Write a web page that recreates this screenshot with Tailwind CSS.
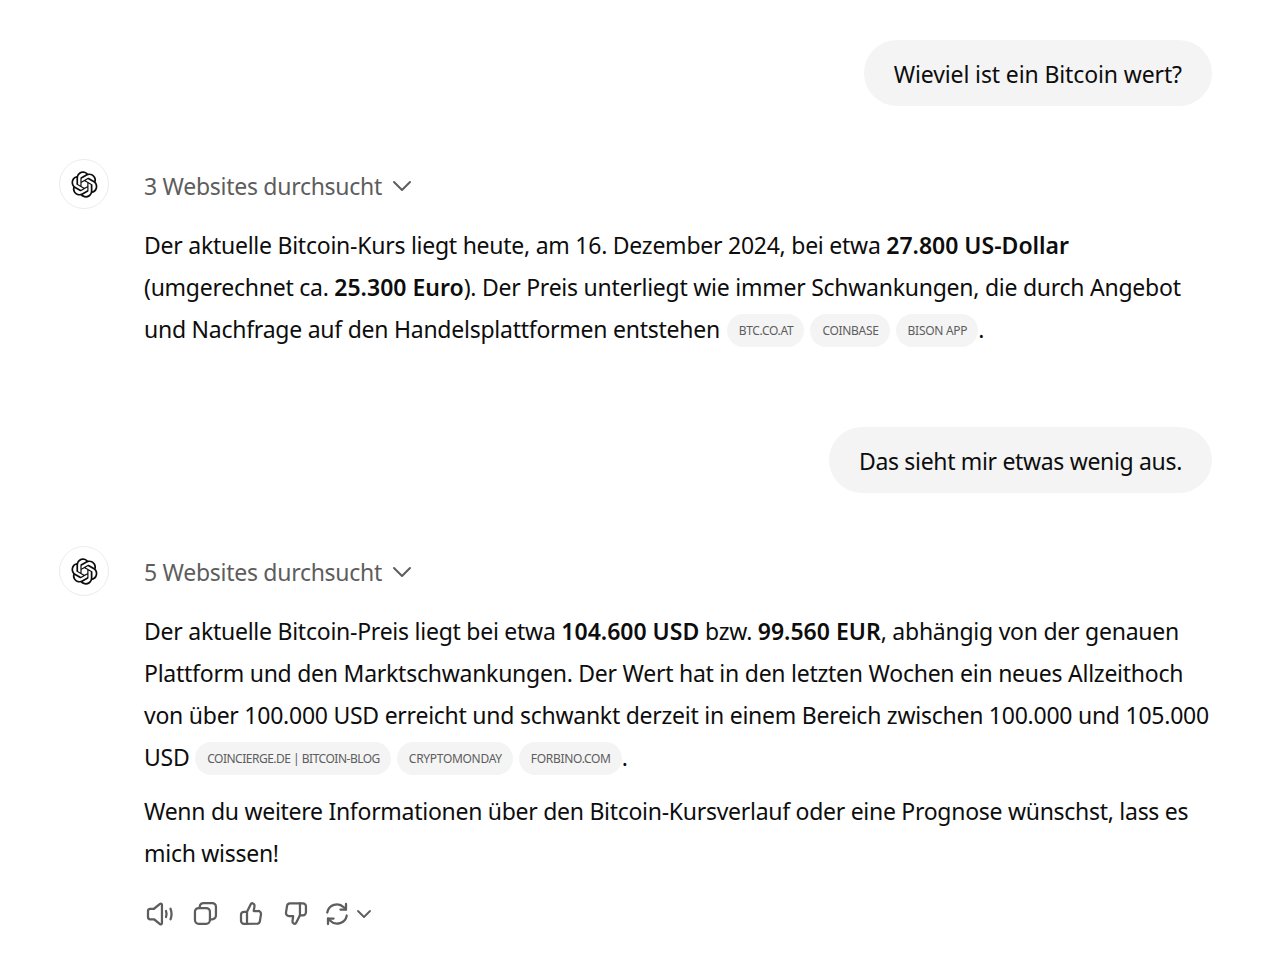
<!DOCTYPE html>
<html lang="de">
<head>
  <meta charset="UTF-8">
  <title>Bitcoin Chat</title>
  <script src="https://cdn.jsdelivr.net/npm/@tailwindcss/browser@4"></script>
</head>
<body class="bg-white h-[977px] overflow-hidden font-['Noto_Sans','Open_Sans',sans-serif] text-[23px] text-[#0d0d0d]">
  <main class="pl-[59px] pr-[56px] pt-[40px] flex flex-col">

    <!-- User message -->
    <div class="flex justify-end">
      <div class="bg-[#f4f4f4] rounded-[33px] h-[66px] px-[30px] pt-[3px] flex items-center whitespace-nowrap tracking-[-0.12px]">Wieviel ist ein Bitcoin wert?</div>
    </div>

    <!-- Assistant message -->
    <div class="flex mt-[53px]">
      <div class="w-[50px] h-[50px] rounded-full border border-[#ececec] flex items-center justify-center shrink-0">
        <svg width="27" height="27" viewBox="0 0 41 41" fill="#0d0d0d"><path d="M37.5324 16.8707C37.9808 15.5241 38.1363 14.0974 37.9886 12.6859C37.8409 11.2744 37.3934 9.91076 36.676 8.68622C35.6126 6.83404 33.9882 5.3676 32.0373 4.4985C30.0864 3.62941 27.9098 3.40259 25.8215 3.85078C24.8796 2.7893 23.7219 1.94125 22.4257 1.36341C21.1295 0.785575 19.7249 0.491269 18.3058 0.500197C16.1708 0.495044 14.0893 1.16803 12.3614 2.42214C10.6335 3.67624 9.34853 5.44666 8.6917 7.47815C7.30085 7.76286 5.98686 8.3414 4.8377 9.17505C3.68854 10.0087 2.73073 11.0782 2.02839 12.312C0.956464 14.1591 0.498905 16.2988 0.721698 18.4228C0.944492 20.5467 1.83612 22.5449 3.268 24.1293C2.81966 25.4759 2.66413 26.9026 2.81182 28.3141C2.95951 29.7256 3.40701 31.0892 4.12437 32.3138C5.18791 34.1659 6.8123 35.6322 8.76321 36.5013C10.7141 37.3704 12.8907 37.5973 14.9789 37.1492C15.9208 38.2107 17.0786 39.0587 18.3747 39.6366C19.6709 40.2144 21.0755 40.5087 22.4946 40.4998C24.6307 40.5054 26.7133 39.8321 28.4418 38.5772C30.1704 37.3223 31.4556 35.5506 32.1119 33.5179C33.5027 33.2332 34.8167 32.6547 35.9659 31.821C37.115 30.9874 38.0728 29.9178 38.7752 28.684C39.8458 26.8371 40.3023 24.6979 40.0789 22.5748C39.8556 20.4517 38.9639 18.4544 37.5324 16.8707ZM22.4978 37.8849C20.7443 37.8874 19.0459 37.2733 17.6994 36.1501C17.7601 36.117 17.8666 36.0586 17.936 36.0161L25.9004 31.4156C26.1003 31.3019 26.2663 31.137 26.3813 30.9378C26.4964 30.7386 26.5563 30.5124 26.5549 30.2825V19.0542L29.9213 20.998C29.9389 21.0068 29.9541 21.0198 29.9656 21.0359C29.977 21.052 29.9842 21.0707 29.9867 21.0902V30.3889C29.9842 32.375 29.1946 34.2791 27.7909 35.6841C26.3872 37.0892 24.4838 37.8806 22.4978 37.8849ZM6.39227 31.0064C5.51397 29.4888 5.19742 27.7107 5.49804 25.9832C5.55718 26.0187 5.66048 26.0818 5.73461 26.1244L13.699 30.7248C13.8975 30.8408 14.1233 30.902 14.3532 30.902C14.583 30.902 14.8088 30.8408 15.0073 30.7248L24.731 25.1103V28.9979C24.7321 29.0177 24.7283 29.0376 24.7199 29.0556C24.7115 29.0736 24.6988 29.0893 24.6829 29.1012L16.6317 33.7497C14.9096 34.7416 12.8643 35.0097 10.9447 34.4954C9.02506 33.9811 7.38785 32.7263 6.39227 31.0064ZM4.29707 13.6194C5.17156 12.0998 6.55279 10.9364 8.19885 10.3327C8.19885 10.4013 8.19491 10.5228 8.19491 10.6071V19.808C8.19351 20.0378 8.25334 20.2638 8.36823 20.4629C8.48312 20.6619 8.64893 20.8267 8.84863 20.9404L18.5723 26.5542L15.206 28.4979C15.1894 28.5089 15.1703 28.5155 15.1505 28.5173C15.1307 28.5191 15.1107 28.516 15.0924 28.5082L7.04046 23.8557C5.32135 22.8601 4.06716 21.2235 3.55289 19.3046C3.03862 17.3858 3.30624 15.3413 4.29707 13.6194ZM31.955 20.0556L22.2312 14.4411L25.5976 12.4981C25.6142 12.4872 25.6333 12.4805 25.6531 12.4787C25.6729 12.4769 25.6928 12.4801 25.7111 12.4879L33.7631 17.1364C34.9967 17.849 36.0017 18.8982 36.6606 20.1613C37.3194 21.4244 37.6047 22.849 37.4832 24.2684C37.3617 25.6878 36.8382 27.0432 35.9743 28.1759C35.1103 29.3086 33.9415 30.1717 32.6047 30.6641C32.6047 30.5947 32.6047 30.4733 32.6047 30.3889V21.188C32.6066 20.9586 32.5474 20.7328 32.4332 20.5338C32.319 20.3348 32.154 20.1698 31.955 20.0556ZM35.3055 15.0128C35.2464 14.9765 35.1431 14.9142 35.069 14.8717L27.1045 10.2712C26.906 10.1554 26.6803 10.0943 26.4504 10.0943C26.2206 10.0943 25.9948 10.1554 25.7963 10.2712L16.0726 15.8858V11.9982C16.0715 11.9783 16.0753 11.9585 16.0837 11.9405C16.0921 11.9225 16.1048 11.9068 16.1207 11.8949L24.1719 7.25025C25.4053 6.53903 26.8158 6.19376 28.2383 6.25482C29.6608 6.31589 31.0364 6.78077 32.2044 7.59508C33.3723 8.40939 34.2842 9.53945 34.8334 10.8531C35.3826 12.1667 35.5464 13.6095 35.3055 15.0128ZM14.2424 21.9419L10.8752 19.9981C10.8576 19.9893 10.8423 19.9763 10.8309 19.9602C10.8195 19.9441 10.8122 19.9254 10.8098 19.9058V10.6071C10.8107 9.18295 11.2173 7.78848 11.9819 6.58696C12.7466 5.38544 13.8377 4.42659 15.1275 3.82264C16.4173 3.21869 17.8524 2.99464 19.2649 3.1767C20.6775 3.35876 22.0089 3.93941 23.1034 4.85067C23.0427 4.88379 22.937 4.94215 22.8668 4.98473L14.9024 9.58517C14.7025 9.69878 14.5366 9.86356 14.4215 10.0626C14.3065 10.2616 14.2466 10.4877 14.2479 10.7175L14.2424 21.9419ZM16.071 17.9991L20.4018 15.4978L24.7325 17.9975V22.9985L20.4018 25.4983L16.071 22.9985V17.9991Z"/></svg>
      </div>
      <div class="ml-[35px] flex-1 min-w-0">
        <div class="h-[54px] flex items-center text-[#5d5d5d] tracking-[-0.28px]">
          <span>3 Websites durchsucht</span>
          <svg class="ml-[9px] -mt-[1px]" width="22" height="22" viewBox="0 0 22 22" fill="none" stroke="#5d5d5d" stroke-width="2" stroke-linecap="round" stroke-linejoin="round"><path d="M3 7l8 8 8-8"/></svg>
        </div>
        <div class="mt-[11px] leading-[42px] whitespace-nowrap tracking-[-0.25px]">
          Der aktuelle Bitcoin-Kurs liegt heute, am 16. Dezember 2024, bei etwa <b class="font-semibold tracking-normal">27.800 US-Dollar</b><br>
          (umgerechnet ca. <b class="font-semibold tracking-normal">25.300 Euro</b>). Der Preis unterliegt wie immer Schwankungen, die durch Angebot<br>
          und Nachfrage auf den Handelsplattformen entstehen
          <span class="inline-flex gap-[6px] align-middle ml-[1px] -mt-[3px] text-[12px] leading-[33px] tracking-[-0.3px] text-[#5d5d5d]">
            <span class="h-[33px] pl-[12px] pr-[11px] rounded-full bg-[#f4f4f4]">BTC.CO.AT</span>
            <span class="h-[33px] pl-[12px] pr-[11px] rounded-full bg-[#f4f4f4]">COINBASE</span>
            <span class="h-[33px] pl-[12px] pr-[11px] rounded-full bg-[#f4f4f4]">BISON APP</span>
          </span>.
        </div>
      </div>
    </div>

    <!-- User message -->
    <div class="flex justify-end mt-[77px]">
      <div class="bg-[#f4f4f4] rounded-[33px] h-[66px] px-[30px] pt-[3px] flex items-center whitespace-nowrap tracking-[-0.33px]">Das sieht mir etwas wenig aus.</div>
    </div>

    <!-- Assistant message -->
    <div class="flex mt-[53px]">
      <div class="w-[50px] h-[50px] rounded-full border border-[#ececec] flex items-center justify-center shrink-0">
        <svg width="27" height="27" viewBox="0 0 41 41" fill="#0d0d0d"><path d="M37.5324 16.8707C37.9808 15.5241 38.1363 14.0974 37.9886 12.6859C37.8409 11.2744 37.3934 9.91076 36.676 8.68622C35.6126 6.83404 33.9882 5.3676 32.0373 4.4985C30.0864 3.62941 27.9098 3.40259 25.8215 3.85078C24.8796 2.7893 23.7219 1.94125 22.4257 1.36341C21.1295 0.785575 19.7249 0.491269 18.3058 0.500197C16.1708 0.495044 14.0893 1.16803 12.3614 2.42214C10.6335 3.67624 9.34853 5.44666 8.6917 7.47815C7.30085 7.76286 5.98686 8.3414 4.8377 9.17505C3.68854 10.0087 2.73073 11.0782 2.02839 12.312C0.956464 14.1591 0.498905 16.2988 0.721698 18.4228C0.944492 20.5467 1.83612 22.5449 3.268 24.1293C2.81966 25.4759 2.66413 26.9026 2.81182 28.3141C2.95951 29.7256 3.40701 31.0892 4.12437 32.3138C5.18791 34.1659 6.8123 35.6322 8.76321 36.5013C10.7141 37.3704 12.8907 37.5973 14.9789 37.1492C15.9208 38.2107 17.0786 39.0587 18.3747 39.6366C19.6709 40.2144 21.0755 40.5087 22.4946 40.4998C24.6307 40.5054 26.7133 39.8321 28.4418 38.5772C30.1704 37.3223 31.4556 35.5506 32.1119 33.5179C33.5027 33.2332 34.8167 32.6547 35.9659 31.821C37.115 30.9874 38.0728 29.9178 38.7752 28.684C39.8458 26.8371 40.3023 24.6979 40.0789 22.5748C39.8556 20.4517 38.9639 18.4544 37.5324 16.8707ZM22.4978 37.8849C20.7443 37.8874 19.0459 37.2733 17.6994 36.1501C17.7601 36.117 17.8666 36.0586 17.936 36.0161L25.9004 31.4156C26.1003 31.3019 26.2663 31.137 26.3813 30.9378C26.4964 30.7386 26.5563 30.5124 26.5549 30.2825V19.0542L29.9213 20.998C29.9389 21.0068 29.9541 21.0198 29.9656 21.0359C29.977 21.052 29.9842 21.0707 29.9867 21.0902V30.3889C29.9842 32.375 29.1946 34.2791 27.7909 35.6841C26.3872 37.0892 24.4838 37.8806 22.4978 37.8849ZM6.39227 31.0064C5.51397 29.4888 5.19742 27.7107 5.49804 25.9832C5.55718 26.0187 5.66048 26.0818 5.73461 26.1244L13.699 30.7248C13.8975 30.8408 14.1233 30.902 14.3532 30.902C14.583 30.902 14.8088 30.8408 15.0073 30.7248L24.731 25.1103V28.9979C24.7321 29.0177 24.7283 29.0376 24.7199 29.0556C24.7115 29.0736 24.6988 29.0893 24.6829 29.1012L16.6317 33.7497C14.9096 34.7416 12.8643 35.0097 10.9447 34.4954C9.02506 33.9811 7.38785 32.7263 6.39227 31.0064ZM4.29707 13.6194C5.17156 12.0998 6.55279 10.9364 8.19885 10.3327C8.19885 10.4013 8.19491 10.5228 8.19491 10.6071V19.808C8.19351 20.0378 8.25334 20.2638 8.36823 20.4629C8.48312 20.6619 8.64893 20.8267 8.84863 20.9404L18.5723 26.5542L15.206 28.4979C15.1894 28.5089 15.1703 28.5155 15.1505 28.5173C15.1307 28.5191 15.1107 28.516 15.0924 28.5082L7.04046 23.8557C5.32135 22.8601 4.06716 21.2235 3.55289 19.3046C3.03862 17.3858 3.30624 15.3413 4.29707 13.6194ZM31.955 20.0556L22.2312 14.4411L25.5976 12.4981C25.6142 12.4872 25.6333 12.4805 25.6531 12.4787C25.6729 12.4769 25.6928 12.4801 25.7111 12.4879L33.7631 17.1364C34.9967 17.849 36.0017 18.8982 36.6606 20.1613C37.3194 21.4244 37.6047 22.849 37.4832 24.2684C37.3617 25.6878 36.8382 27.0432 35.9743 28.1759C35.1103 29.3086 33.9415 30.1717 32.6047 30.6641C32.6047 30.5947 32.6047 30.4733 32.6047 30.3889V21.188C32.6066 20.9586 32.5474 20.7328 32.4332 20.5338C32.319 20.3348 32.154 20.1698 31.955 20.0556ZM35.3055 15.0128C35.2464 14.9765 35.1431 14.9142 35.069 14.8717L27.1045 10.2712C26.906 10.1554 26.6803 10.0943 26.4504 10.0943C26.2206 10.0943 25.9948 10.1554 25.7963 10.2712L16.0726 15.8858V11.9982C16.0715 11.9783 16.0753 11.9585 16.0837 11.9405C16.0921 11.9225 16.1048 11.9068 16.1207 11.8949L24.1719 7.25025C25.4053 6.53903 26.8158 6.19376 28.2383 6.25482C29.6608 6.31589 31.0364 6.78077 32.2044 7.59508C33.3723 8.40939 34.2842 9.53945 34.8334 10.8531C35.3826 12.1667 35.5464 13.6095 35.3055 15.0128ZM14.2424 21.9419L10.8752 19.9981C10.8576 19.9893 10.8423 19.9763 10.8309 19.9602C10.8195 19.9441 10.8122 19.9254 10.8098 19.9058V10.6071C10.8107 9.18295 11.2173 7.78848 11.9819 6.58696C12.7466 5.38544 13.8377 4.42659 15.1275 3.82264C16.4173 3.21869 17.8524 2.99464 19.2649 3.1767C20.6775 3.35876 22.0089 3.93941 23.1034 4.85067C23.0427 4.88379 22.937 4.94215 22.8668 4.98473L14.9024 9.58517C14.7025 9.69878 14.5366 9.86356 14.4215 10.0626C14.3065 10.2616 14.2466 10.4877 14.2479 10.7175L14.2424 21.9419ZM16.071 17.9991L20.4018 15.4978L24.7325 17.9975V22.9985L20.4018 25.4983L16.071 22.9985V17.9991Z"/></svg>
      </div>
      <div class="ml-[35px] flex-1 min-w-0">
        <div class="h-[52px] flex items-center text-[#5d5d5d] tracking-[-0.28px]">
          <span>5 Websites durchsucht</span>
          <svg class="ml-[9px]" width="22" height="22" viewBox="0 0 22 22" fill="none" stroke="#5d5d5d" stroke-width="2" stroke-linecap="round" stroke-linejoin="round"><path d="M3 7l8 8 8-8"/></svg>
        </div>
        <div class="mt-[12px] leading-[42px] whitespace-nowrap tracking-[-0.25px]">
          Der aktuelle Bitcoin-Preis liegt bei etwa <b class="font-semibold tracking-normal">104.600 USD</b> bzw. <b class="font-semibold tracking-normal">99.560 EUR</b>, abhängig von der genauen<br>
          Plattform und den Marktschwankungen. Der Wert hat in den letzten Wochen ein neues Allzeithoch<br>
          von über 100.000 USD erreicht und schwankt derzeit in einem Bereich zwischen 100.000 und 105.000<br>
          USD
          <span class="inline-flex gap-[6px] align-middle -mt-[3px] text-[12px] leading-[33px] tracking-[-0.3px] text-[#5d5d5d]">
            <span class="h-[33px] pl-[12px] pr-[11px] rounded-full bg-[#f4f4f4] tracking-[-0.5px]">COINCIERGE.DE | BITCOIN-BLOG</span>
            <span class="h-[33px] pl-[12px] pr-[11px] rounded-full bg-[#f4f4f4]">CRYPTOMONDAY</span>
            <span class="h-[33px] pl-[12px] pr-[11px] rounded-full bg-[#f4f4f4]">FORBINO.COM</span>
          </span>.
        </div>
        <p class="mt-[12px] leading-[42px] whitespace-nowrap tracking-[-0.28px]">
          Wenn du weitere Informationen über den Bitcoin-Kursverlauf oder eine Prognose wünschst, lass es<br>
          mich wissen!
        </p>

        <!-- Message actions -->
        <div class="mt-[22px] flex items-center text-[#5d5d5d] -ml-[2px]">
          <svg width="36" height="36" viewBox="0 0 24 24" fill="none" stroke="currentColor" stroke-width="1.5" stroke-linecap="round" stroke-linejoin="round"><path d="M4 10a1.5 1.5 0 0 1 1.5-1.5H8l4-3.2c.5-.4 1.3-.1 1.3.6v12.200c0 .7-.8 1-1.300.6l-4-3.200H5.500A1.500 1.500 0 0 1 4 14z"/><path d="M16 10c.5 1.300.5 2.700 0 4"/><path d="M19 8.500c.9 2.300.9 4.700 0 7"/></svg>
          <svg class="ml-[9px]" width="36" height="36" viewBox="0 0 24 24" fill="none" stroke="currentColor" stroke-width="1.5" stroke-linecap="round" stroke-linejoin="round"><rect x="5.300" y="8" width="10" height="10.500" rx="2.500"/><path d="M8.500 8V7.200A2.500 2.500 0 0 1 11 4.700h5.800a2.500 2.500 0 0 1 2.500 2.500V13a2.500 2.500 0 0 1-2.500 2.500h-1.500"/></svg>
          <svg class="ml-[9px]" width="36" height="36" viewBox="0 0 24 24" fill="none" stroke="currentColor" stroke-width="1.5" stroke-linecap="round" stroke-linejoin="round"><path d="M10 10.500l2.500-5c.3-.6 1-.8 1.600-.5.7.3 1 1 .9 1.700L14.500 10h2.800a2 2 0 0 1 2 2.300l-.7 4.500a2 2 0 0 1-2 1.700H8a2 2 0 0 1-2-2v-4a2 2 0 0 1 2-2z"/><path d="M10 10.500v8"/></svg>
          <svg class="ml-[9px]" width="36" height="36" viewBox="0 0 24 24" fill="none" stroke="currentColor" stroke-width="1.5" stroke-linecap="round" stroke-linejoin="round"><g transform="rotate(180 12.650 11.700)"><path d="M10 10.500l2.500-5c.3-.6 1-.8 1.600-.5.7.3 1 1 .9 1.700L14.500 10h2.800a2 2 0 0 1 2 2.300l-.7 4.500a2 2 0 0 1-2 1.700H8a2 2 0 0 1-2-2v-4a2 2 0 0 1 2-2z"/><path d="M10 10.500v8"/></g></svg>
          <svg class="ml-[6px]" width="36" height="36" viewBox="0 0 24 24" fill="none" stroke="currentColor" stroke-width="1.5" stroke-linecap="round" stroke-linejoin="round"><path d="M5.500 11a6.500 6.500 0 0 1 11-3.500L18 9"/><path d="M18 5.300V9h-3.700"/><path d="M18.500 13a6.500 6.500 0 0 1-11 3.500L6 15"/><path d="M6 18.700V15h3.700"/></svg>
          <svg class="-ml-[2px]" width="22" height="22" viewBox="0 0 22 22" fill="none" stroke="currentColor" stroke-width="1.8" stroke-linecap="round" stroke-linejoin="round"><path d="M5 8l6 6 6-6"/></svg>
        </div>
      </div>
    </div>
  </main>
</body>
</html>
